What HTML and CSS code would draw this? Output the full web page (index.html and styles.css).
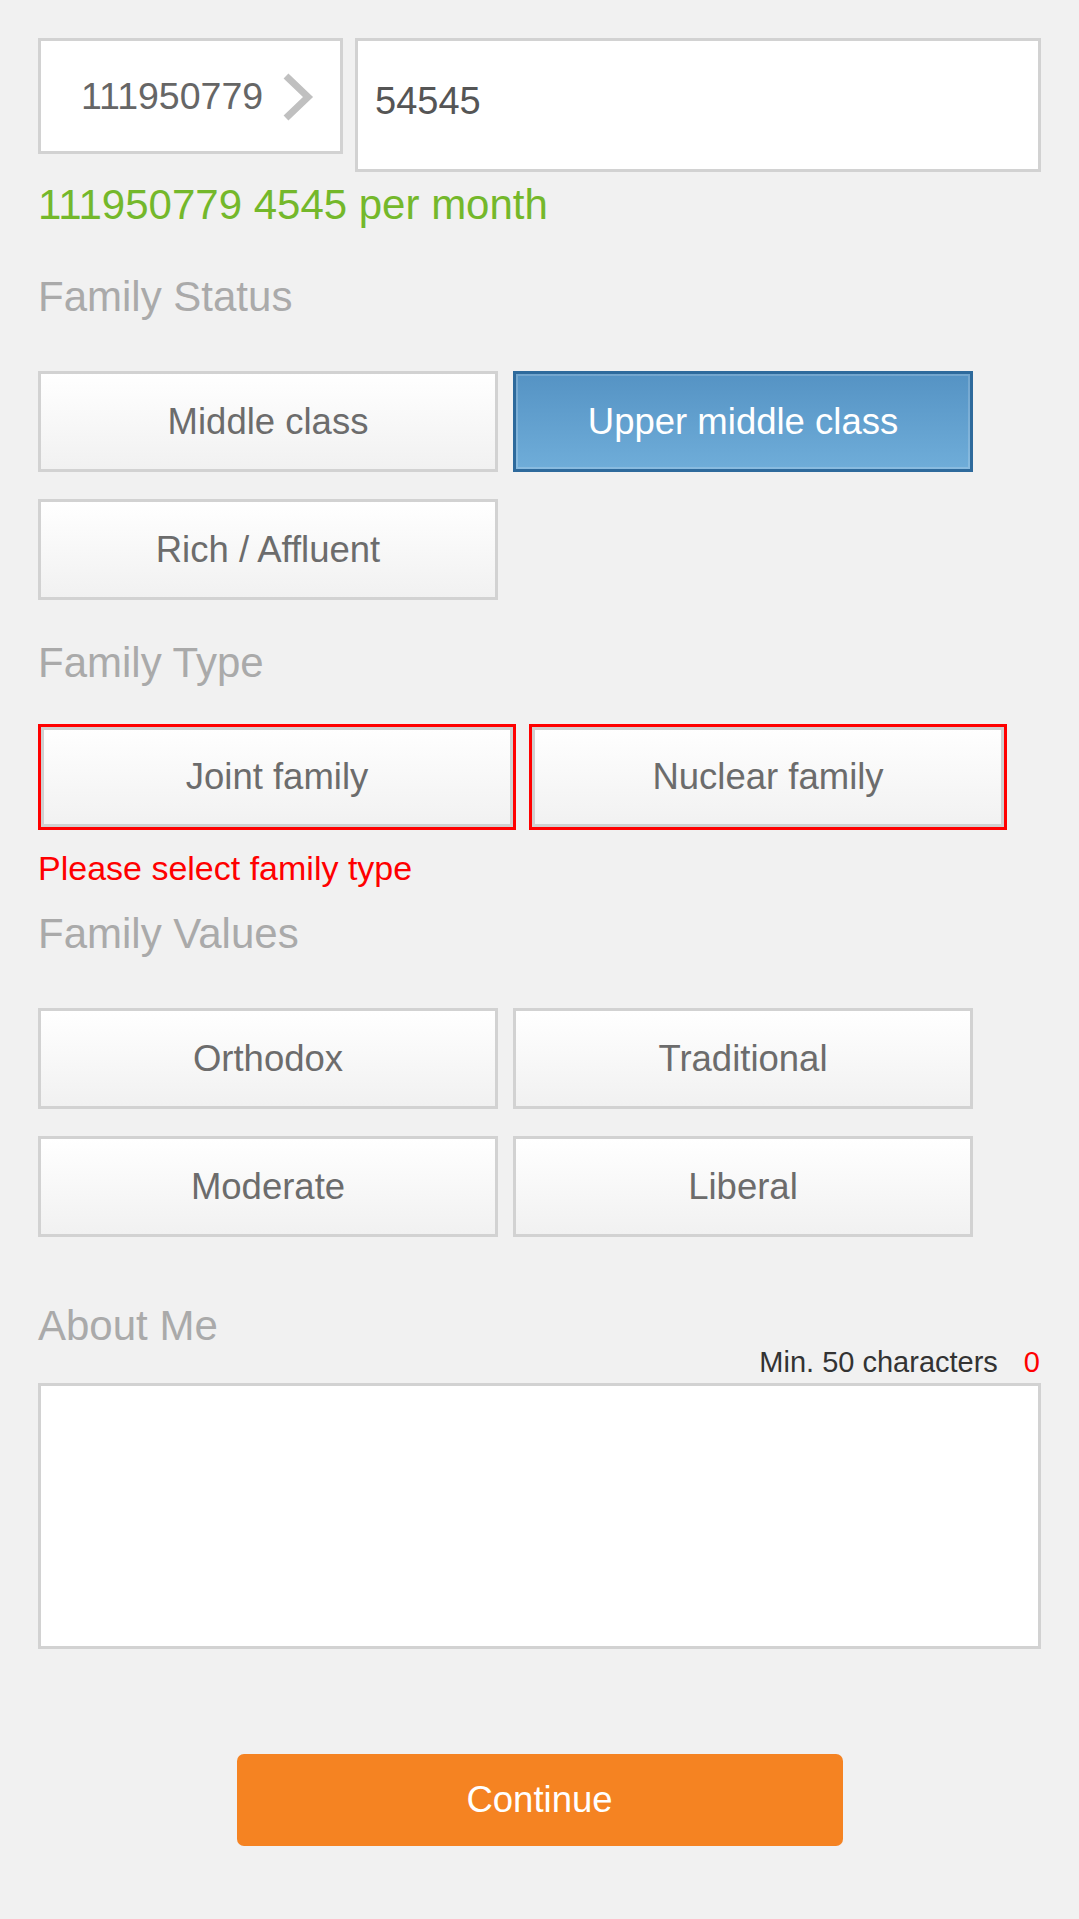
FILE: index.html
```html
<!DOCTYPE html>
<html lang="en">
<head>
<meta charset="utf-8">
<title>Family Details</title>
<link rel="stylesheet" href="styles.css">
</head>
<body>
<form class="page">
  <div class="income-row">
    <div class="currency-box">
      <span class="currency-value">111950779</span>
      <svg class="chevron" width="34" height="50" viewBox="0 0 34 50" aria-hidden="true">
        <defs>
          <filter id="soft" x="-20%" y="-20%" width="140%" height="140%">
            <feGaussianBlur stdDeviation="0.7"/>
          </filter>
        </defs>
        <polyline points="7,4 29,25 7,46" fill="none" stroke="#c0c0c0" stroke-width="7" filter="url(#soft)"/>
      </svg>
    </div>
    <div class="amount-box">54545</div>
  </div>
  <div class="income-note">111950779 4545 per month</div>

  <div class="section-label status-label">Family Status</div>
  <div class="options">
    <div class="option">Middle class</div>
    <div class="option option-selected">Upper middle class</div>
    <div class="option">Rich / Affluent</div>
  </div>

  <div class="section-label type-label">Family Type</div>
  <div class="options options-type">
    <div class="option option-wide option-error">Joint family</div>
    <div class="option option-wide option-error">Nuclear family</div>
  </div>
  <div class="error-text">Please select family type</div>

  <div class="section-label values-label">Family Values</div>
  <div class="options">
    <div class="option">Orthodox</div>
    <div class="option">Traditional</div>
    <div class="option">Moderate</div>
    <div class="option">Liberal</div>
  </div>

  <div class="section-label about-label">About Me</div>
  <div class="counter"><span>Min. 50 characters</span><span class="counter-num">0</span></div>
  <textarea class="about-text" aria-label="About Me"></textarea>

  <div class="actions">
    <button type="button" class="continue-btn">Continue</button>
  </div>
</form>
</body>
</html>
```

FILE: styles.css
```css
html, body {
  margin: 0;
  padding: 0;
  background: #f1f1f1;
}

body {
  font-family: "Liberation Sans", Arial, sans-serif;
  color: #666;
}

.page {
  padding: 38px 38px 60px;
  display: flex;
  flex-direction: column;
}

.income-row {
  display: flex;
  align-items: flex-start;
  gap: 12px;
}

.currency-box {
  box-sizing: border-box;
  width: 305px;
  height: 116px;
  background: #fff;
  border: 3px solid #d2d2d2;
  display: flex;
  align-items: center;
  padding-left: 40px;
  gap: 16px;
}

.currency-value {
  font-size: 37.5px;
  line-height: 42px;
  color: #666;
}

.chevron {
  display: block;
  margin-top: 2px;
}

.amount-box {
  box-sizing: border-box;
  flex: 1;
  height: 134px;
  background: #fff;
  border: 3px solid #d2d2d2;
  padding: 38px 0 0 17px;
  font-size: 38px;
  line-height: 44px;
  color: #555;
}

.income-note {
  margin-top: 9px;
  font-size: 42px;
  line-height: 48px;
  color: #74b82b;
}

.section-label {
  font-size: 42px;
  line-height: 48px;
  color: #aaa;
}

.status-label { margin-top: 44px; }
.type-label { margin-top: 39px; }
.values-label { margin-top: 23px; }
.about-label { margin-top: 68px; line-height: 42px; }

.options {
  display: flex;
  flex-wrap: wrap;
  gap: 27px 15px;
  margin-top: 50px;
}

.options-type {
  gap: 13px;
  margin-top: 37px;
}

.option {
  box-sizing: border-box;
  width: 460px;
  height: 101px;
  border: 3px solid #d2d2d2;
  background: linear-gradient(#ffffff, #f1f1f1);
  display: flex;
  align-items: center;
  justify-content: center;
  font-size: 36.5px;
  color: #6c6c6c;
}

.option-selected {
  border-color: #2e6a9c;
  background: linear-gradient(#5593c4, #6fadd9);
  box-shadow: inset 0 0 0 2px rgba(255, 255, 255, 0.18);
  color: #fff;
}

.option-wide {
  width: 478px;
  height: 106px;
}

.option-error {
  border: 3px solid #ff0000;
  box-shadow: inset 0 0 0 3px #d0d0d0;
}

.error-text {
  margin-top: 19px;
  font-size: 34px;
  line-height: 38px;
  color: #ff0000;
}

.counter {
  display: flex;
  justify-content: flex-end;
  gap: 26px;
  font-size: 29px;
  line-height: 30px;
  color: #333;
}

.counter-num {
  color: #ff0000;
  padding-right: 1px;
}

.about-text {
  display: block;
  box-sizing: border-box;
  margin: 6px 0 0;
  width: 100%;
  height: 266px;
  border: 3px solid #d2d2d2;
  background: #fff;
  resize: none;
  font-family: inherit;
  font-size: 36px;
  padding: 10px;
  outline: none;
}

.actions {
  display: flex;
  justify-content: center;
  margin-top: 105px;
}

.continue-btn {
  width: 606px;
  height: 92px;
  border: none;
  border-radius: 7px;
  background: #f58322;
  color: #fff;
  font-family: inherit;
  font-size: 36.5px;
  cursor: pointer;
}
```
